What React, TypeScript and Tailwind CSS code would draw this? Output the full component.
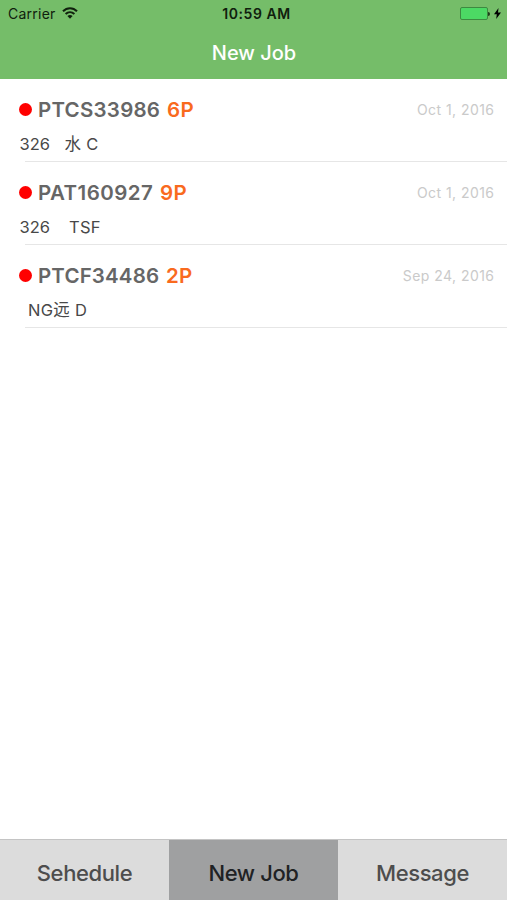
type Job = { code: string; count: string; date: string; room: string; detail: string; roomClass: string; codeClass: string };

const jobs: Job[] = [
  { code: 'PTCS33986', count: '6P', date: 'Oct 1, 2016', room: '326', detail: '水 C', roomClass: 'w-[45px]', codeClass: 'w-[129px] tracking-[0.25px]' },
  { code: 'PAT160927', count: '9P', date: 'Oct 1, 2016', room: '326', detail: 'TSF', roomClass: 'w-[49.5px]', codeClass: 'w-[122px] tracking-[0.45px]' },
  { code: 'PTCF34486', count: '2P', date: 'Sep 24, 2016', room: '', detail: 'NG远 D', roomClass: 'w-[8.5px]', codeClass: 'w-[128px] tracking-[0.15px]' },
];

function StatusBar() {
  return (
    <div className="grid h-[27px] grid-cols-3 items-center pl-2 pr-[6px] text-[#10200d]">
      <div className="flex items-center gap-[6px]">
        <span className="text-[14px] leading-[27px] tracking-[0.25px]">Carrier</span>
        <svg className="mb-[2px] h-[12px] w-[16px]" viewBox="0 0 16 12" fill="none" stroke="currentColor" strokeWidth="2">
          <path d="M1 4.2C5 .1 11 .1 15 4.2" />
          <path d="M3.6 7C6.2 4.6 9.8 4.6 12.4 7" />
          <path d="M5.4 9C7 7.6 9 7.6 10.6 9L8 11.8Z" fill="currentColor" stroke="none" />
        </svg>
      </div>
      <span className="pl-[4px] text-center text-[14px] font-semibold leading-[27px] tracking-[0.55px]">10:59 AM</span>
      <div className="flex items-center justify-end">
        <div className="h-[13px] w-[28px] rounded-[2px] border border-[#3d8a40] bg-[#4cd964]" />
        <div className="h-[4px] w-[2px] rounded-r-full bg-[#1d3a1a]" />
        <svg className="ml-[4px] h-[11px] w-[7px]" viewBox="0 0 7 11" fill="black">
          <path d="M4.5 0 0 6.2h2.8L2.2 11 7 4.6H4Z" />
        </svg>
      </div>
    </div>
  );
}

function JobRow({ job }: { job: Job }) {
  return (
    <li className="flex h-[83px] flex-col">
      <div className="flex h-[61px] items-center pl-[19px] pr-[12.5px]">
        <span className="mr-[6px] size-[13px] rounded-full bg-[#ff0000]" />
        <span className={`whitespace-nowrap pt-[2px] text-[20.5px] font-semibold text-[#666] ${job.codeClass}`}>{job.code}</span>
        <span className="pt-[2px] text-[20.5px] font-semibold tracking-[0.3px] text-[#f96a1e]">{job.count}</span>
        <span className="ml-auto text-[14px] tracking-[0.45px] text-[#cacaca]">{job.date}</span>
      </div>
      <div className="-mt-[6px] flex h-[20px] items-center whitespace-pre pl-[19.5px] text-[16.5px] leading-5 text-[#484848]">
        <span className={job.roomClass}>{job.room}</span>
        <span className="tracking-[0.3px]">{job.detail}</span>
      </div>
      <div className="ml-[25px] mt-auto h-px bg-[#e6e6e6]" />
    </li>
  );
}

function Tab({ label, active }: { label: string; active?: boolean }) {
  return (
    <button
      className={`flex flex-1 items-center justify-center pt-[7px] text-[22px] font-medium tracking-[-0.4px] ${
        active ? 'bg-[#9fa0a1] text-[#202224]' : 'bg-[#dcdcdc] text-[#4d4d4d]'
      }`}
    >
      {label}
    </button>
  );
}

export default function App() {
  return (
    <div className="flex h-[900px] w-[507px] flex-col overflow-hidden bg-white font-['Inter','Noto_Sans_CJK_SC',sans-serif]">
      <header className="h-[79px] shrink-0 bg-[#75bd69]">
        <StatusBar />
        <h1 className="pl-px pt-px text-center text-[20px] font-medium leading-[50px] text-white">New Job</h1>
      </header>
      <ul className="flex-1">
        {jobs.map((job) => (
          <JobRow key={job.code} job={job} />
        ))}
      </ul>
      <nav className="flex h-[61px] shrink-0 border-t border-[#c4c4c4]">
        <Tab label="Sehedule" />
        <Tab label="New Job" active />
        <Tab label="Message" />
      </nav>
    </div>
  );
}
